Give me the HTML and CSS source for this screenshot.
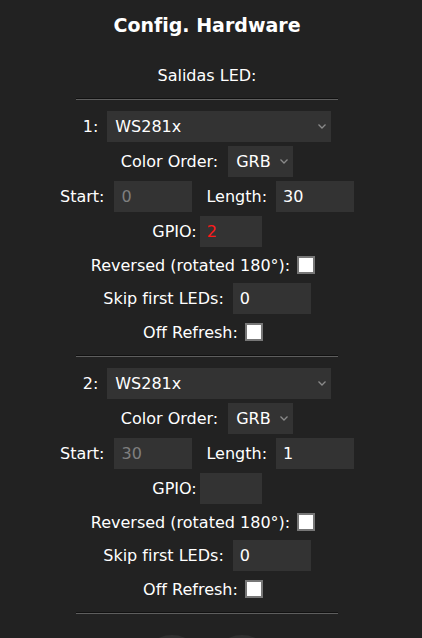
FILE: index.html
```html
<!DOCTYPE html>
<html lang="es">
<head>
<meta charset="utf-8">
<title>Config. Hardware</title>
<link rel="stylesheet" href="styles.css">
</head>
<body>
<div class="page">
  <h2 class="title">Config. Hardware</h2>
  <div class="section-label">Salidas LED:</div>
  <hr class="sep sep-first">

  <div class="block">
    <div class="row">
      <span>1:</span>
      <span class="sel-wrap sel-type">
        <select class="sel"><option>WS281x</option></select>
        <svg class="chev" width="8" height="5" viewBox="0 0 8 5"><path d="M0.5 0.5 L4 4 L7.5 0.5" fill="none" stroke="#8a8a8a" stroke-width="1.3"/></svg>
      </span>
    </div>
    <div class="row">
      <span>Color Order:</span>
      <span class="sel-wrap sel-order">
        <select class="sel"><option>GRB</option></select>
        <svg class="chev" width="8" height="5" viewBox="0 0 8 5"><path d="M0.5 0.5 L4 4 L7.5 0.5" fill="none" stroke="#8a8a8a" stroke-width="1.3"/></svg>
      </span>
    </div>
    <div class="row">
      <span>Start:</span>
      <input class="inp inp-start" type="text" value="0" disabled>
      <span class="lbl-length">Length:</span>
      <input class="inp inp-len" type="text" value="30">
    </div>
    <div class="row">
      <span>GPIO:</span>
      <input class="inp inp-gpio inp-red" type="text" value="2">
    </div>
    <div class="row row-check">
      <span>Reversed (rotated 180°):</span>
      <input class="chk" type="checkbox">
    </div>
    <div class="row">
      <span>Skip first LEDs:</span>
      <input class="inp inp-skip" type="text" value="0">
    </div>
    <div class="row row-check">
      <span>Off Refresh:</span>
      <input class="chk" type="checkbox">
    </div>
  </div>

  <hr class="sep">

  <div class="block">
    <div class="row">
      <span>2:</span>
      <span class="sel-wrap sel-type">
        <select class="sel"><option>WS281x</option></select>
        <svg class="chev" width="8" height="5" viewBox="0 0 8 5"><path d="M0.5 0.5 L4 4 L7.5 0.5" fill="none" stroke="#8a8a8a" stroke-width="1.3"/></svg>
      </span>
    </div>
    <div class="row">
      <span>Color Order:</span>
      <span class="sel-wrap sel-order">
        <select class="sel"><option>GRB</option></select>
        <svg class="chev" width="8" height="5" viewBox="0 0 8 5"><path d="M0.5 0.5 L4 4 L7.5 0.5" fill="none" stroke="#8a8a8a" stroke-width="1.3"/></svg>
      </span>
    </div>
    <div class="row">
      <span>Start:</span>
      <input class="inp inp-start" type="text" value="30" disabled>
      <span class="lbl-length">Length:</span>
      <input class="inp inp-len" type="text" value="1">
    </div>
    <div class="row">
      <span>GPIO:</span>
      <input class="inp inp-gpio" type="text" value="">
    </div>
    <div class="row row-check">
      <span>Reversed (rotated 180°):</span>
      <input class="chk" type="checkbox">
    </div>
    <div class="row">
      <span>Skip first LEDs:</span>
      <input class="inp inp-skip" type="text" value="0">
    </div>
    <div class="row row-check">
      <span>Off Refresh:</span>
      <input class="chk" type="checkbox">
    </div>
  </div>

  <hr class="sep">

  <div class="buttons">
    <span class="round-btn"></span>
    <span class="round-btn"></span>
  </div>
</div>
</body>
</html>
```

FILE: styles.css
```css
html, body {
  margin: 0;
  padding: 0;
  background: #222;
}

body {
  font-family: "DejaVu Sans", Verdana, sans-serif;
  font-size: 16px;
  color: #fff;
}

.page {
  width: 414px;
  display: flex;
  flex-direction: column;
  align-items: center;
}

.title {
  margin: 14px 0 0;
  font-size: 19px;
  line-height: 22px;
  font-weight: bold;
}

.section-label {
  margin-top: 30px;
  line-height: 19px;
}

.sep {
  box-sizing: border-box;
  width: 262px;
  height: 2px;
  margin: 7px 0 9px;
  border: none;
  border-top: 1px solid #111;
  border-bottom: 1px solid #5e5e5e;
}

.sep-first {
  margin-top: 13px;
}

.block {
  display: flex;
  flex-direction: column;
  align-items: center;
}

.row {
  height: 35px;
  display: flex;
  align-items: center;
  justify-content: center;
  white-space: nowrap;
}

.row-check {
  height: 32px;
}

.sel-wrap {
  position: relative;
  display: inline-block;
  margin-left: 9px;
  height: 31px;
}

.sel-type { width: 224px; }
.sel-order { width: 65px; margin-left: 10px; }

.sel {
  appearance: none;
  -webkit-appearance: none;
  width: 100%;
  height: 31px;
  margin: 0;
  padding: 0 0 0 8px;
  border: none;
  border-radius: 0;
  background: #333;
  color: #fff;
  font-family: "DejaVu Sans", Verdana, sans-serif;
  font-size: 16px;
  outline: none;
}

.chev {
  position: absolute;
  right: 5px;
  top: 13px;
  pointer-events: none;
}

.inp {
  box-sizing: border-box;
  height: 31px;
  margin: 0;
  padding: 0 7px;
  border: none;
  border-radius: 0;
  background: #333;
  color: #fff;
  font-family: "DejaVu Sans", Verdana, sans-serif;
  font-size: 16px;
  outline: none;
}

.inp:disabled {
  color: #7f7f7f;
  -webkit-text-fill-color: #7f7f7f;
  opacity: 1;
}

.inp-start { width: 78px; margin-left: 10px; }
.inp-len { width: 78px; margin-left: 9px; }
.lbl-length { margin-left: 14px; }
.inp-gpio { width: 62px; margin-left: 3px; }
.inp-skip { width: 78px; margin-left: 9px; }
.inp-red { color: #ff1a1a; }

.chk {
  appearance: none;
  -webkit-appearance: none;
  box-sizing: border-box;
  width: 18px;
  height: 18px;
  margin: 0 8px 0 7px;
  border: 2px solid #777;
  border-radius: 0;
  background: #fff;
}

.buttons {
  display: flex;
  gap: 6px;
  margin-top: 12px;
}

.round-btn {
  display: block;
  width: 64px;
  height: 64px;
  border-radius: 50%;
  background: #303030;
}
```
